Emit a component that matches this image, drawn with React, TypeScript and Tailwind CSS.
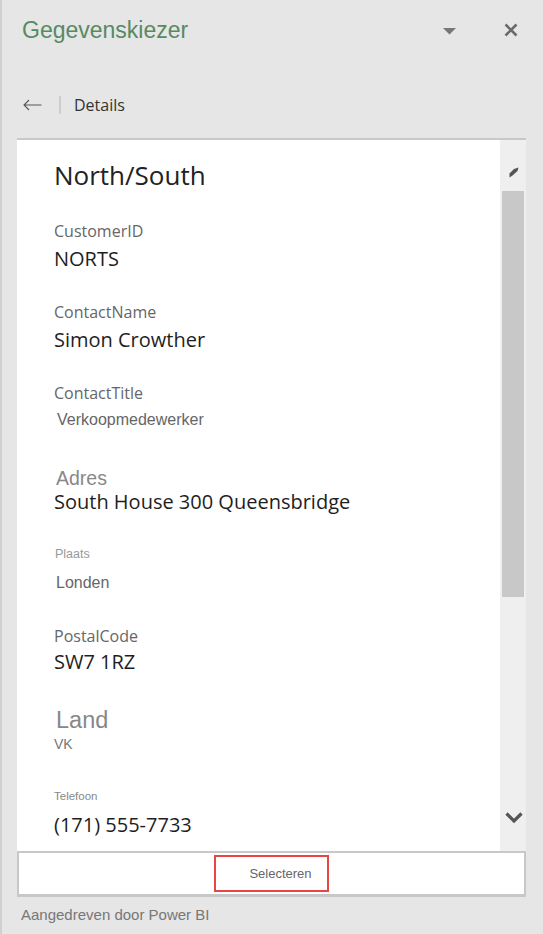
import React from "react";

const seg = { fontFamily: '"Open Sans", "Noto Sans", sans-serif' };
const ari = { fontFamily: '"Liberation Sans", Arial, sans-serif' };

export default function App() {
  return (
    <div className="w-[543px] h-[934px] bg-[#e6e6e6] border-l-2 border-[#d0d0d0] flex flex-col overflow-hidden">
      {/* Header */}
      <div className="h-[60px] flex items-center pl-[20px] shrink-0">
        <div style={ari} className="text-[23px] leading-[60px] text-[#568a64]">Gegevenskiezer</div>
        <div className="ml-auto flex items-center">
          <svg width="13" height="7" viewBox="0 0 13 7" className="mt-[2px]">
            <polygon points="0,0 13,0 6.5,6.5" fill="#777777" />
          </svg>
          <svg width="14" height="14" viewBox="0 0 14 14" className="ml-[48px] mr-[25px]">
            <path d="M1.5 1.5 L12.5 12.5 M12.5 1.5 L1.5 12.5" stroke="#6a6a6a" strokeWidth="2.6" />
          </svg>
        </div>
      </div>
      {/* Back row */}
      <div className="h-[34px] mt-[28px] flex items-center pl-[21px] shrink-0">
        <svg width="19" height="12" viewBox="0 0 19 12">
          <path d="M1 6 H18.5 M6 1 L1 6 L6 11" stroke="#555" strokeWidth="1.1" fill="none" />
        </svg>
        <div className="w-[2px] h-[18px] bg-[#cdcdcd] ml-[17px]" />
        <div style={seg} className="ml-[13px] text-[16px] text-[#333]">Details</div>
      </div>
      {/* Panel */}
      <div className="mt-[16px] ml-[15px] w-[509px] h-[713px] border-t-2 border-[#c8c8c8] flex shrink-0">
        <div className="flex-1 bg-white overflow-hidden pl-[37px]">
          <div style={seg} className="mt-[17px] h-[36px] leading-[36px] text-[26px] text-[#222]">North/South</div>
          <Label mt={26}>CustomerID</Label>
          <Value mt={4}>NORTS</Value>
          <Label mt={29}>ContactName</Label>
          <Value mt={4}>Simon Crowther</Value>
          <Label mt={29}>ContactTitle</Label>
          <div style={ari} className="mt-[3px] h-[24px] leading-[24px] text-[16px] text-[#666] pl-[3px]">Verkoopmedewerker</div>
          <div style={ari} className="mt-[34px] h-[24px] leading-[24px] text-[19.5px] text-[#888] pl-[2px]">Adres</div>
          <Value mt={0}>South House 300 Queensbridge</Value>
          <div style={ari} className="mt-[28px] h-[24px] leading-[24px] text-[12.5px] text-[#999] pl-[1px]">Plaats</div>
          <div style={ari} className="mt-[5px] h-[24px] leading-[24px] text-[16px] text-[#666] pl-[2px]">Londen</div>
          <Label mt={29}>PostalCode</Label>
          <Value mt={2}>SW7 1RZ</Value>
          <div style={ari} className="mt-[34px] h-[24px] leading-[24px] text-[23.5px] text-[#888] pl-[2px]">Land</div>
          <div style={ari} className="mt-[0px] h-[24px] leading-[24px] text-[14px] text-[#777]">VK</div>
          <div style={ari} className="mt-[28px] h-[24px] leading-[24px] text-[11.5px] text-[#888]">Telefoon</div>
          <Value mt={5}>(171) 555-7733</Value>
        </div>
        <div className="w-[26px] bg-[#efefef] flex flex-col items-center">
          <svg width="10" height="11" viewBox="0 0 10 11" className="mt-[27px] ml-[1px]">
            <path d="M0.5 10.5 L0.5 6.5 L5 2 L9.5 0.5 L8.5 4 L3.5 8.5 Z" fill="#555" />
          </svg>
          <div className="mt-[13px] w-[22px] h-[406px] bg-[#c8c8c8]" />
          <svg width="18" height="14" viewBox="0 0 18 14" className="mt-[214px] ml-[1px]">
            <path d="M1.5 2.5 L9 10 L16.5 2.5" stroke="#555" strokeWidth="3.2" fill="none" />
          </svg>
        </div>
      </div>
      {/* Select bar */}
      <div className="ml-[15px] w-[509px] h-[46px] border-2 border-b-[3px] border-[#c8c8c8] bg-white flex items-center justify-center shrink-0">
        <div className="w-[115px] h-[37px] border-2 border-[#e84545] flex items-center justify-center pl-[18px]">
          <span style={ari} className="text-[13px] text-[#666]">Selecteren</span>
        </div>
      </div>
      {/* Footer */}
      <div style={ari} className="pl-[19px] mt-[8px] text-[15px] leading-[20px] text-[#777]">Aangedreven door Power BI</div>
    </div>
  );
}

function Label({ mt, children }: { mt: number; children: React.ReactNode }) {
  return (
    <div style={{ ...seg, marginTop: mt }} className="h-[24px] leading-[24px] text-[16px] text-[#666]">
      {children}
    </div>
  );
}

function Value({ mt, children }: { mt: number; children: React.ReactNode }) {
  return (
    <div style={{ ...seg, marginTop: mt }} className="h-[24px] leading-[24px] text-[20px] text-[#1e1e1e]">
      {children}
    </div>
  );
}
